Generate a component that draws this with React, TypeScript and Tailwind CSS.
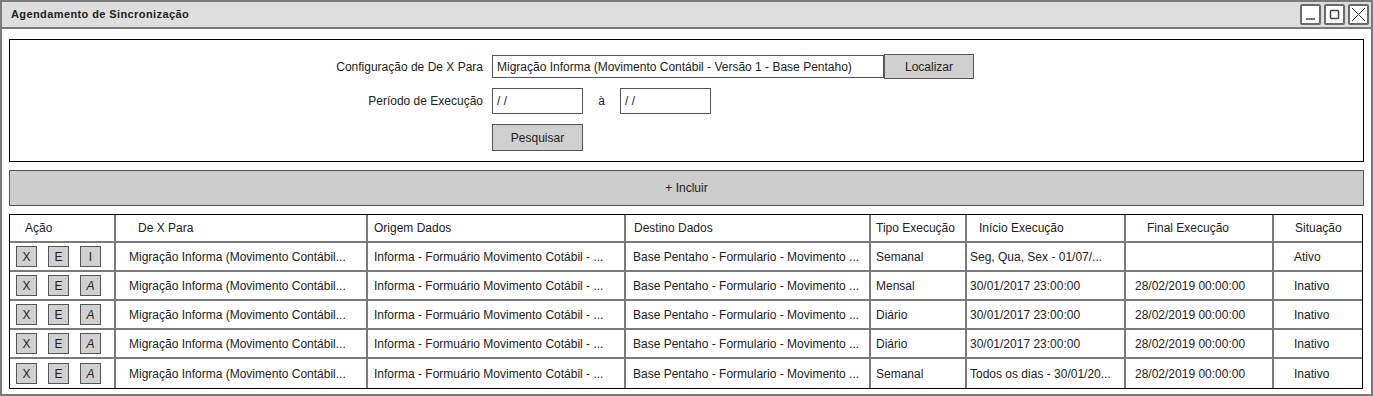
import React from 'react'

type Row = {
  actions: string[]
  dexpara: string
  origem: string
  destino: string
  tipo: string
  inicio: string
  final: string
  situacao: string
}

const rows: Row[] = [
  { actions: ['X', 'E', 'I'], dexpara: 'Migração Informa (Movimento Contábil...', origem: 'Informa - Formuário Movimento Cotábil - ...', destino: 'Base Pentaho - Formulario - Movimento ...', tipo: 'Semanal', inicio: 'Seg, Qua, Sex - 01/07/...', final: '', situacao: 'Ativo' },
  { actions: ['X', 'E', 'A'], dexpara: 'Migração Informa (Movimento Contábil...', origem: 'Informa - Formuário Movimento Cotábil - ...', destino: 'Base Pentaho - Formulario - Movimento ...', tipo: 'Mensal', inicio: '30/01/2017 23:00:00', final: '28/02/2019 00:00:00', situacao: 'Inativo' },
  { actions: ['X', 'E', 'A'], dexpara: 'Migração Informa (Movimento Contábil...', origem: 'Informa - Formuário Movimento Cotábil - ...', destino: 'Base Pentaho - Formulario - Movimento ...', tipo: 'Diário', inicio: '30/01/2017 23:00:00', final: '28/02/2019 00:00:00', situacao: 'Inativo' },
  { actions: ['X', 'E', 'A'], dexpara: 'Migração Informa (Movimento Contábil...', origem: 'Informa - Formuário Movimento Cotábil - ...', destino: 'Base Pentaho - Formulario - Movimento ...', tipo: 'Diário', inicio: '30/01/2017 23:00:00', final: '28/02/2019 00:00:00', situacao: 'Inativo' },
  { actions: ['X', 'E', 'A'], dexpara: 'Migração Informa (Movimento Contábil...', origem: 'Informa - Formuário Movimento Cotábil - ...', destino: 'Base Pentaho - Formulario - Movimento ...', tipo: 'Semanal', inicio: 'Todos os dias - 30/01/20...', final: '28/02/2019 00:00:00', situacao: 'Inativo' },
]

const cols = 'grid grid-cols-[104px_252px_258px_245px_96px_159px_148px_90px]'

function WinButton({ children }: { children: React.ReactNode }) {
  return (
    <div className="w-[21px] h-[21px] border-2 border-[#6b6b6b] rounded-[2px] bg-white flex items-center justify-center">
      {children}
    </div>
  )
}

export default function App() {
  return (
    <div className="w-[1373px] h-[396px] bg-white border-2 border-[#7a7a7a] text-[12px] text-[#222] font-['Liberation_Sans',Arial,sans-serif] flex flex-col">
      {/* Title bar */}
      <div className="h-[27px] shrink-0 bg-[#dedede] border-b-2 border-[#7a7a7a] flex items-center justify-between pl-[9px] pr-[2px]">
        <span className="font-bold text-[11px] tracking-[0.4px]">Agendamento de Sincronização</span>
        <div className="flex gap-[3px]">
          <WinButton>
            <svg width="13" height="13" viewBox="0 0 13 13"><path d="M2 11h9" stroke="#444" strokeWidth="1.5" /></svg>
          </WinButton>
          <WinButton>
            <svg width="13" height="13" viewBox="0 0 13 13"><rect x="2.5" y="2.5" width="8" height="8" fill="none" stroke="#444" strokeWidth="1.5" rx="1" /></svg>
          </WinButton>
          <WinButton>
            <svg width="15" height="15" viewBox="0 0 15 15"><path d="M1 1l13 13M14 1L1 14" stroke="#333" strokeWidth="1" /></svg>
          </WinButton>
        </div>
      </div>

      <div className="flex-1 px-[7px] pt-[10px] flex flex-col">
        {/* Search panel */}
        <div className="h-[123px] border border-black flex flex-col pt-[14px]">
          <div className="flex items-center h-[25px]">
            <div className="w-[475px] text-right pr-[2px]">Configuração de De X Para</div>
            <div className="ml-[7px] w-[392px] h-[23px] border border-[#555] flex items-center px-[4px]">
              Migração Informa (Movimento Contábil - Versão 1 - Base Pentaho)
            </div>
            <div className="w-[90px] h-[25px] border border-[#555] bg-[#d0d0d0] flex items-center justify-center">Localizar</div>
          </div>
          <div className="flex items-center h-[26px] mt-[9px]">
            <div className="w-[475px] text-right pr-[2px]">Período de Execução</div>
            <div className="ml-[7px] w-[91px] h-[26px] border border-[#555] flex items-center px-[4px]">/ /</div>
            <div className="w-[37px] text-center">à</div>
            <div className="w-[91px] h-[26px] border border-[#555] flex items-center px-[4px]">/ /</div>
          </div>
          <div className="flex mt-[10px]">
            <div className="ml-[482px] w-[91px] h-[27px] border border-[#555] bg-[#d0d0d0] flex items-center justify-center">Pesquisar</div>
          </div>
        </div>

        {/* Incluir */}
        <div className="mt-[8px] h-[36px] border border-[#555] bg-[#cdcdcd] flex items-center justify-center">+ Incluir</div>

        {/* Table */}
        <div className="mt-[8px] w-[1354px] border border-black">
          <div className={`${cols} h-[28px] items-center border-b-2 border-[#7a7a7a]`}>
            <div className="pl-[15px] h-full flex items-center">Ação</div>
            <div className="pl-[22px] h-full flex items-center border-l-2 border-[#7a7a7a]">De X Para</div>
            <div className="pl-[6px] h-full flex items-center border-l-2 border-[#7a7a7a]">Origem Dados</div>
            <div className="pl-[8px] h-full flex items-center border-l-2 border-[#7a7a7a]">Destino Dados</div>
            <div className="pl-[5px] h-full flex items-center border-l-2 border-[#7a7a7a]">Tipo Execução</div>
            <div className="pl-[12px] h-full flex items-center border-l-2 border-[#7a7a7a]">Início Execução</div>
            <div className="pl-[21px] h-full flex items-center border-l-2 border-[#7a7a7a]">Final Execução</div>
            <div className="pl-[21px] h-full flex items-center border-l-2 border-[#7a7a7a]">Situação</div>
          </div>
          {rows.map((r, i) => (
            <div
              key={i}
              className={`${cols} h-[29px] ${i < rows.length - 1 ? 'border-b-2 border-[#7a7a7a]' : ''}`}
            >
              <div className="flex items-center gap-[11px] pl-[6px]">
                {r.actions.map((a, j) => (
                  <div
                    key={j}
                    className={`w-[21px] h-[21px] border border-[#555] bg-[#d0d0d0] flex items-center justify-center text-[12px] ${a === 'A' ? 'italic' : ''}`}
                  >
                    {a}
                  </div>
                ))}
              </div>
              <div className="pl-[13px] flex items-center border-l-2 border-[#7a7a7a] whitespace-nowrap overflow-hidden">{r.dexpara}</div>
              <div className="pl-[6px] flex items-center border-l-2 border-[#7a7a7a] whitespace-nowrap overflow-hidden">{r.origem}</div>
              <div className="pl-[7px] flex items-center border-l-2 border-[#7a7a7a] whitespace-nowrap overflow-hidden">{r.destino}</div>
              <div className="pl-[5px] flex items-center border-l-2 border-[#7a7a7a] whitespace-nowrap overflow-hidden">{r.tipo}</div>
              <div className="pl-[3px] flex items-center border-l-2 border-[#7a7a7a] whitespace-nowrap overflow-hidden">{r.inicio}</div>
              <div className="pl-[9px] flex items-center border-l-2 border-[#7a7a7a] whitespace-nowrap overflow-hidden">{r.final}</div>
              <div className="pl-[20px] flex items-center border-l-2 border-[#7a7a7a] whitespace-nowrap overflow-hidden">{r.situacao}</div>
            </div>
          ))}
        </div>
      </div>
    </div>
  )
}
